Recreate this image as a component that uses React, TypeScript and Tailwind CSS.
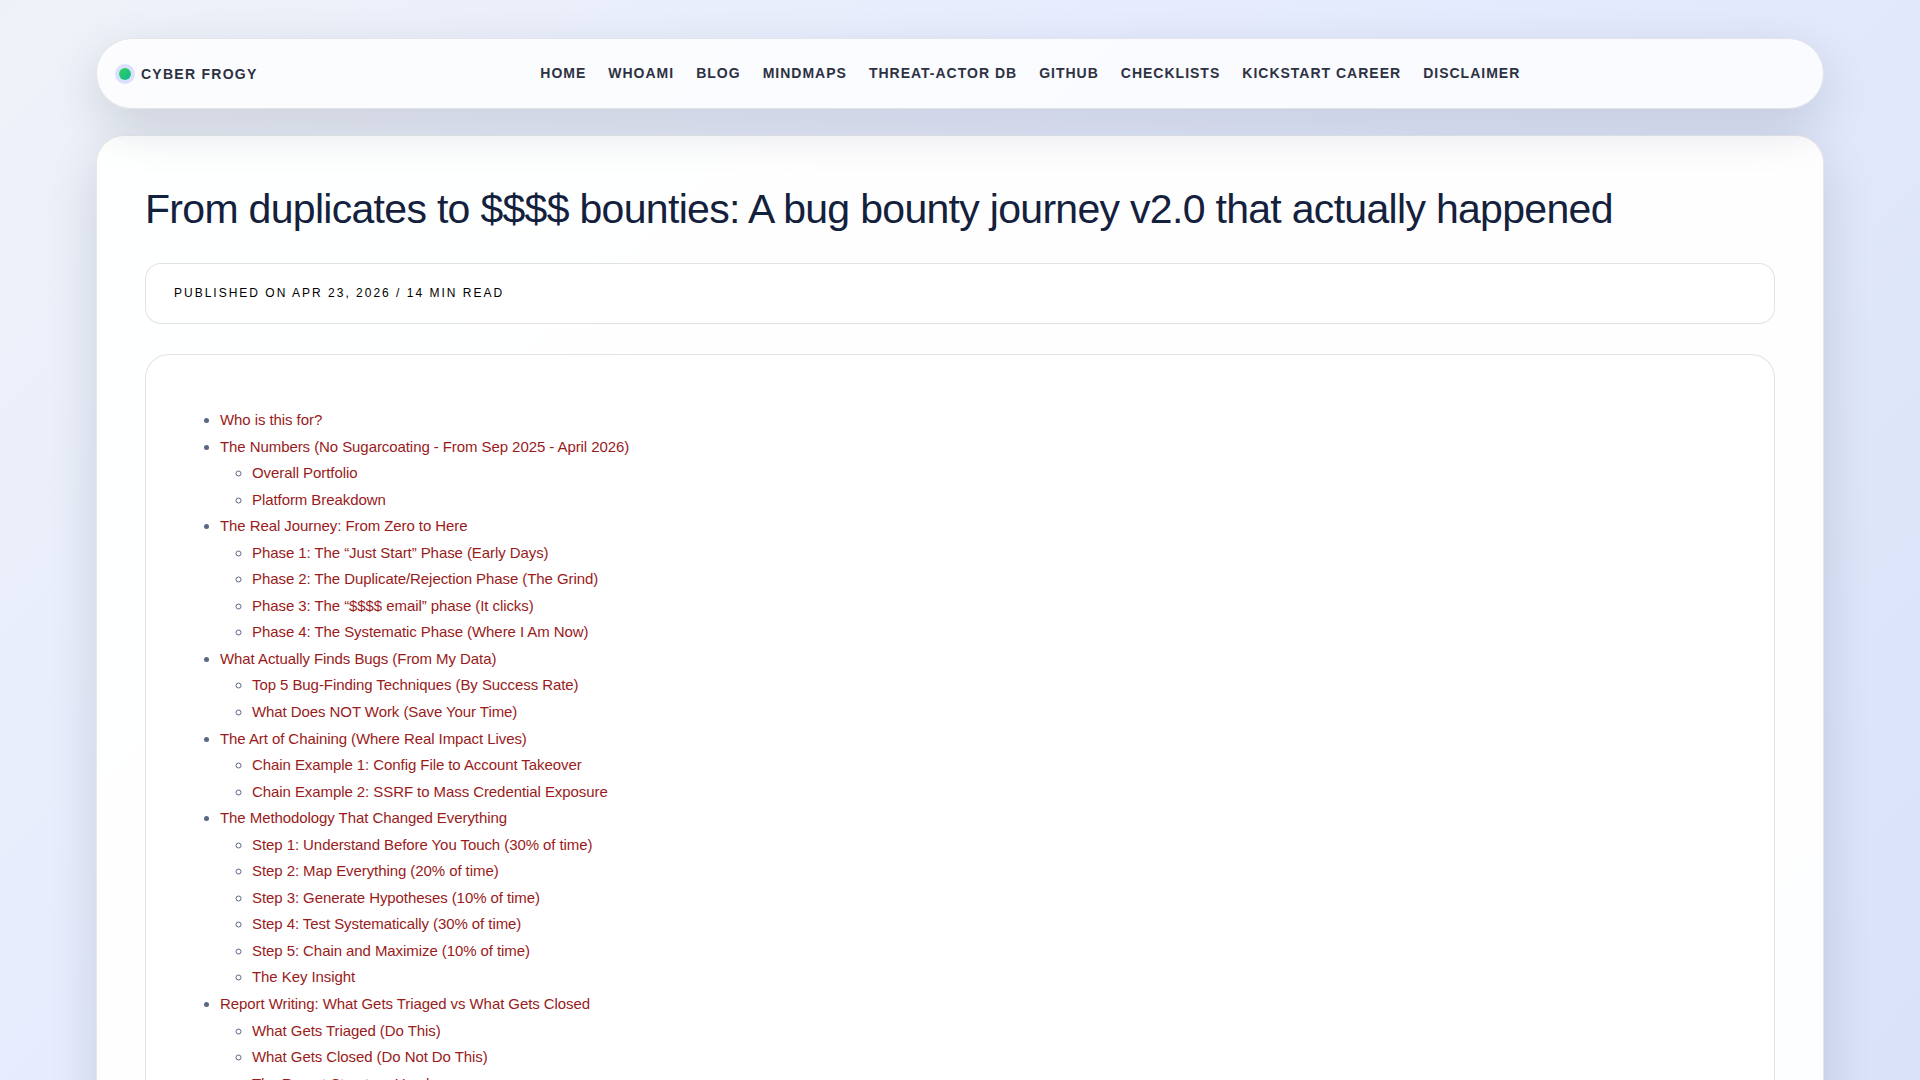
import React from "react";

interface TocItem {
    title: string;
    children?: string[];
}

const navLinks = [
    "Home",
    "Whoami",
    "Blog",
    "Mindmaps",
    "Threat-Actor DB",
    "GitHub",
    "Checklists",
    "Kickstart Career",
    "Disclaimer",
];

const toc: TocItem[] = [
    { title: "Who is this for?" },
    {
        title: "The Numbers (No Sugarcoating - From Sep 2025 - April 2026)",
        children: ["Overall Portfolio", "Platform Breakdown"],
    },
    {
        title: "The Real Journey: From Zero to Here",
        children: [
            "Phase 1: The “Just Start” Phase (Early Days)",
            "Phase 2: The Duplicate/Rejection Phase (The Grind)",
            "Phase 3: The “$$$$ email” phase (It clicks)",
            "Phase 4: The Systematic Phase (Where I Am Now)",
        ],
    },
    {
        title: "What Actually Finds Bugs (From My Data)",
        children: [
            "Top 5 Bug-Finding Techniques (By Success Rate)",
            "What Does NOT Work (Save Your Time)",
        ],
    },
    {
        title: "The Art of Chaining (Where Real Impact Lives)",
        children: [
            "Chain Example 1: Config File to Account Takeover",
            "Chain Example 2: SSRF to Mass Credential Exposure",
        ],
    },
    {
        title: "The Methodology That Changed Everything",
        children: [
            "Step 1: Understand Before You Touch (30% of time)",
            "Step 2: Map Everything (20% of time)",
            "Step 3: Generate Hypotheses (10% of time)",
            "Step 4: Test Systematically (30% of time)",
            "Step 5: Chain and Maximize (10% of time)",
            "The Key Insight",
        ],
    },
    {
        title: "Report Writing: What Gets Triaged vs What Gets Closed",
        children: [
            "What Gets Triaged (Do This)",
            "What Gets Closed (Do Not Do This)",
            "The Report Structure Used",
        ],
    },
];

const toAnchor = (title: string) =>
    "#" +
    title
        .toLowerCase()
        .replace(/[^a-z0-9]+/g, "-")
        .replace(/^-|-$/g, "");

const Header = () => {
    return (
        <header className="relative flex items-center h-[71px] px-5 rounded-full border border-slate-900/10 bg-white/80 shadow-[0_18px_50px_rgba(15,23,42,0.14)]">
            <a
                href="#home"
                className="flex items-center gap-2.5 text-sm font-bold tracking-[0.09em] uppercase text-[#2d3142]"
            >
                <span className="ml-0.5 size-3 rounded-full bg-linear-135 from-[#2fd158] to-[#14b890] ring-4 ring-[#dbe0ff]" />
                Cyber Frogy
            </a>
            <nav className="flex flex-1 justify-center gap-[22px] pb-0.5 text-sm font-bold tracking-[1px] uppercase text-[#2d3142]">
                {navLinks.map((link) => (
                    <a key={link} href={toAnchor(link)}>
                        {link}
                    </a>
                ))}
            </nav>
        </header>
    );
};

const TableOfContents = () => {
    return (
        <ul className="list-disc pl-[26px] text-[15px] leading-[1.77] tracking-[-0.005em] text-[#5b6584]">
            {toc.map((item) => (
                <li key={item.title}>
                    <a href={toAnchor(item.title)} className="text-[#991b1b]">
                        {item.title}
                    </a>
                    {item.children && (
                        <ul className="list-[circle] pl-8">
                            {item.children.map((child) => (
                                <li key={child}>
                                    <a
                                        href={toAnchor(child)}
                                        className="text-[#991b1b]"
                                    >
                                        {child}
                                    </a>
                                </li>
                            ))}
                        </ul>
                    )}
                </li>
            ))}
        </ul>
    );
};

const App = () => {
    return (
        <div className="h-screen overflow-hidden bg-linear-135 from-[#eef2f8] via-[#e6ecfe] via-40% to-[#d9e2f8] font-['Liberation_Sans',Arial,sans-serif]">
            <div className="mx-auto w-[90%] pt-[38px]">
                <Header />
                <main className="mt-[26px] px-12 py-[49px] rounded-[28px] border border-slate-900/10 bg-white/95 shadow-[0_18px_50px_rgba(15,23,42,0.14)]">
                    <h1 className="text-[41px] leading-[48px] tracking-[-0.017em] text-[#14213d]">
                        From duplicates to $$$$ bounties: A bug bounty journey
                        v2.0 that actually happened
                    </h1>
                    <p className="mt-[30px] px-7 pt-[19px] pb-5 rounded-2xl border border-slate-900/12 bg-white text-xs leading-5 tracking-[2px] uppercase text-black">
                        Published on Apr 23, 2026 / 14 min read
                    </p>
                    <article className="mt-[30px] px-12 py-[52px] rounded-3xl border border-slate-900/12 bg-white">
                        <TableOfContents />
                    </article>
                </main>
            </div>
        </div>
    );
};

export default App;
